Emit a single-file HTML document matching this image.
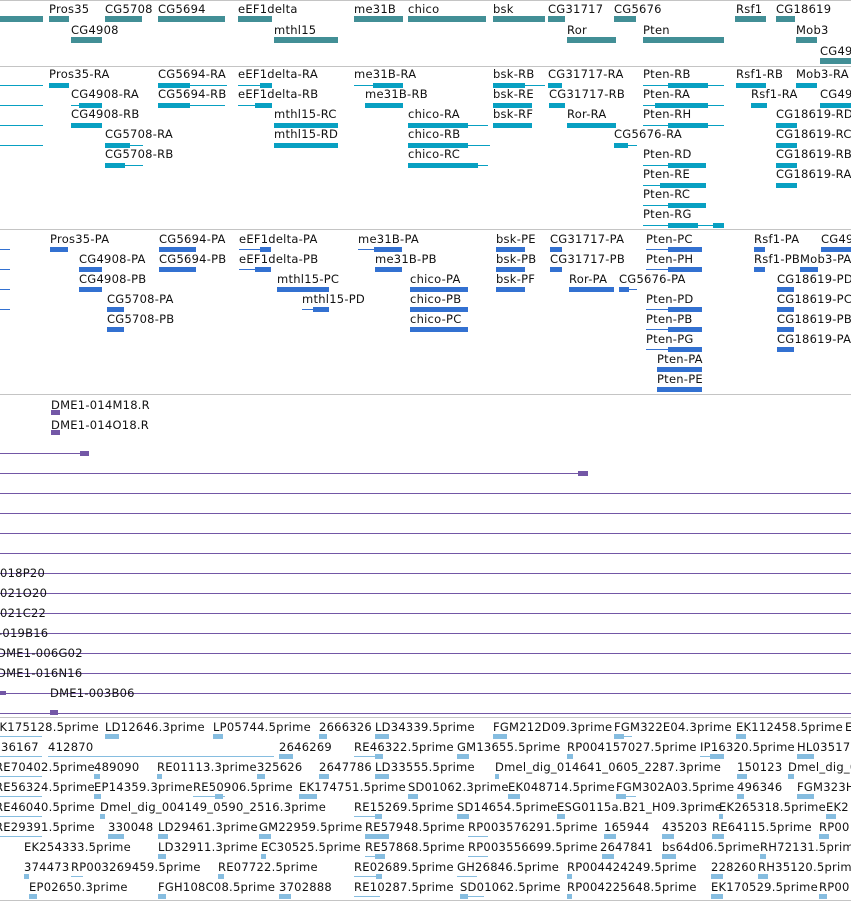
<!DOCTYPE html>
<html><head><meta charset="utf-8"><style>
*{margin:0;padding:0}
body{width:851px;height:902px;background:#fff;position:relative;overflow:hidden;font-family:"DejaVu Sans","Liberation Sans",sans-serif}
.s{position:absolute;left:0;width:851px;height:1px;background:#c4c4c4}
.k{position:absolute;left:0;width:851px}
.r{position:absolute;left:0;width:851px;height:20px}
.l{position:absolute;top:0;font-size:11.5px;line-height:13px;letter-spacing:.25px;white-space:nowrap;color:#111}
.r i{position:absolute;display:block}
.k1 i{top:13px;height:6px;background:#428f96}
.k2 .t{top:17px;height:1px;background:#08a0c2}.k2 .b{top:15px;height:5px;background:#08a0c2}
.k3 .t{top:16px;height:1px;background:#3371d1}.k3 .b{top:14px;height:5px;background:#3371d1}
.k4 .t{top:13px;height:1px;background:#7357a6}.k4 .b{top:11px;height:5px;background:#7357a6}
.k5 .t{top:15px;height:1px;background:#86bde0}.k5 .b{top:13px;height:5px;background:#86bde0}
</style></head><body>
<div class="s" style="top:0"></div>
<div class="s" style="top:66px"></div>
<div class="s" style="top:229px"></div>
<div class="s" style="top:394px"></div>
<div class="s" style="top:717px"></div>
<div class="s" style="top:900px"></div>

<!-- genes -->
<div class="k k1" style="top:3px">
<div class="r" style="top:0">
<i style="left:0;width:43px"></i>
<span class="l" style="left:49px">Pros35</span><i style="left:49px;width:20px"></i>
<span class="l" style="left:105px">CG5708</span><i style="left:105px;width:37px"></i>
<span class="l" style="left:158px">CG5694</span><i style="left:158px;width:67px"></i>
<span class="l" style="left:238px">eEF1delta</span><i style="left:238px;width:34px"></i>
<span class="l" style="left:354px">me31B</span><i style="left:354px;width:49px"></i>
<span class="l" style="left:408px">chico</span><i style="left:408px;width:78px"></i>
<span class="l" style="left:493px">bsk</span><i style="left:493px;width:52px"></i>
<span class="l" style="left:548px">CG31717</span><i style="left:548px;width:17px"></i>
<span class="l" style="left:614px">CG5676</span><i style="left:614px;width:22px"></i>
<span class="l" style="left:736px">Rsf1</span><i style="left:735px;width:31px"></i>
<span class="l" style="left:776px">CG18619</span><i style="left:776px;width:19px"></i>
</div>
<div class="r" style="top:21px">
<span class="l" style="left:71px">CG4908</span><i style="left:71px;width:31px"></i>
<span class="l" style="left:274px">mthl15</span><i style="left:274px;width:64px"></i>
<span class="l" style="left:567px">Ror</span><i style="left:567px;width:49px"></i>
<span class="l" style="left:643px">Pten</span><i style="left:643px;width:81px"></i>
<span class="l" style="left:796px">Mob3</span><i style="left:796px;width:21px"></i>
</div>
<div class="r" style="top:42px">
<span class="l" style="left:820px">CG49</span><i style="left:820px;width:31px"></i>
</div>
</div>

<!-- transcripts -->
<div class="k k2" style="top:68px">
<div class="r" style="top:0">
<i class="t" style="left:0;width:43px"></i>
<span class="l" style="left:49px">Pros35-RA</span><i class="b" style="left:49px;width:20px"></i>
<span class="l" style="left:158px">CG5694-RA</span><i class="b" style="left:158px;width:32px"></i><i class="t" style="left:158px;width:69px"></i>
<span class="l" style="left:238px">eEF1delta-RA</span><i class="t" style="left:238px;width:34px"></i><i class="b" style="left:260px;width:12px"></i>
<span class="l" style="left:354px">me31B-RA</span><i class="t" style="left:354px;width:49px"></i><i class="b" style="left:373px;width:30px"></i>
<span class="l" style="left:493px">bsk-RB</span><i class="b" style="left:493px;width:32px"></i><i class="t" style="left:493px;width:52px"></i>
<span class="l" style="left:548px">CG31717-RA</span><i class="b" style="left:548px;width:14px"></i>
<span class="l" style="left:643px">Pten-RB</span><i class="t" style="left:643px;width:81px"></i><i class="b" style="left:668px;width:40px"></i>
<span class="l" style="left:736px">Rsf1-RB</span><i class="b" style="left:736px;width:30px"></i>
<span class="l" style="left:796px">Mob3-RA</span><i class="b" style="left:796px;width:21px"></i>
</div>
<div class="r" style="top:20px">
<i class="t" style="left:0;width:43px"></i>
<span class="l" style="left:71px">CG4908-RA</span><i class="t" style="left:71px;width:31px"></i><i class="b" style="left:79px;width:23px"></i>
<span class="l" style="left:158px">CG5694-RB</span><i class="b" style="left:158px;width:32px"></i><i class="t" style="left:158px;width:67px"></i>
<span class="l" style="left:238px">eEF1delta-RB</span><i class="t" style="left:238px;width:34px"></i><i class="b" style="left:255px;width:17px"></i>
<span class="l" style="left:365px">me31B-RB</span><i class="b" style="left:365px;width:38px"></i>
<span class="l" style="left:493px">bsk-RE</span><i class="b" style="left:493px;width:39px"></i>
<span class="l" style="left:549px">CG31717-RB</span><i class="b" style="left:549px;width:16px"></i>
<span class="l" style="left:643px">Pten-RA</span><i class="t" style="left:643px;width:81px"></i><i class="b" style="left:655px;width:53px"></i>
<span class="l" style="left:751px">Rsf1-RA</span><i class="b" style="left:751px;width:16px"></i>
<span class="l" style="left:820px">CG49</span><i class="b" style="left:820px;width:31px"></i>
</div>
<div class="r" style="top:40px">
<i class="t" style="left:0;width:43px"></i>
<span class="l" style="left:71px">CG4908-RB</span><i class="b" style="left:71px;width:31px"></i>
<span class="l" style="left:274px">mthl15-RC</span><i class="b" style="left:274px;width:64px"></i>
<span class="l" style="left:408px">chico-RA</span><i class="b" style="left:408px;width:60px"></i><i class="t" style="left:408px;width:80px"></i>
<span class="l" style="left:493px">bsk-RF</span><i class="b" style="left:493px;width:39px"></i>
<span class="l" style="left:567px">Ror-RA</span><i class="b" style="left:567px;width:49px"></i>
<span class="l" style="left:643px">Pten-RH</span><i class="t" style="left:643px;width:81px"></i><i class="b" style="left:668px;width:40px"></i>
<span class="l" style="left:776px">CG18619-RD</span><i class="b" style="left:776px;width:21px"></i>
</div>
<div class="r" style="top:60px">
<i class="t" style="left:0;width:43px"></i>
<span class="l" style="left:105px">CG5708-RA</span><i class="b" style="left:105px;width:25px"></i><i class="t" style="left:105px;width:38px"></i>
<span class="l" style="left:274px">mthl15-RD</span><i class="b" style="left:274px;width:64px"></i>
<span class="l" style="left:408px">chico-RB</span><i class="b" style="left:408px;width:60px"></i><i class="t" style="left:408px;width:82px"></i>
<span class="l" style="left:614px">CG5676-RA</span><i class="b" style="left:614px;width:14px"></i><i class="t" style="left:614px;width:23px"></i>
<span class="l" style="left:776px">CG18619-RC</span><i class="b" style="left:776px;width:21px"></i>
</div>
<div class="r" style="top:80px">
<span class="l" style="left:105px">CG5708-RB</span><i class="b" style="left:105px;width:20px"></i><i class="t" style="left:105px;width:38px"></i>
<span class="l" style="left:408px">chico-RC</span><i class="b" style="left:408px;width:70px"></i><i class="t" style="left:408px;width:80px"></i>
<span class="l" style="left:643px">Pten-RD</span><i class="t" style="left:643px;width:63px"></i><i class="b" style="left:668px;width:38px"></i>
<span class="l" style="left:776px">CG18619-RB</span><i class="b" style="left:776px;width:21px"></i>
</div>
<div class="r" style="top:100px">
<span class="l" style="left:643px">Pten-RE</span><i class="t" style="left:643px;width:63px"></i><i class="b" style="left:660px;width:46px"></i>
<span class="l" style="left:776px">CG18619-RA</span><i class="b" style="left:776px;width:21px"></i>
</div>
<div class="r" style="top:120px">
<span class="l" style="left:643px">Pten-RC</span><i class="t" style="left:643px;width:63px"></i><i class="b" style="left:668px;width:38px"></i>
</div>
<div class="r" style="top:140px">
<span class="l" style="left:643px">Pten-RG</span><i class="t" style="left:643px;width:81px"></i><i class="b" style="left:668px;width:30px"></i><i class="b" style="left:713px;width:11px"></i>
</div>
</div>

<!-- proteins -->
<div class="k k3" style="top:233px">
<div class="r" style="top:0">
<i class="t" style="left:0;width:10px"></i>
<span class="l" style="left:50px">Pros35-PA</span><i class="b" style="left:50px;width:18px"></i>
<span class="l" style="left:159px">CG5694-PA</span><i class="b" style="left:159px;width:37px"></i>
<span class="l" style="left:239px">eEF1delta-PA</span><i class="t" style="left:239px;width:32px"></i><i class="b" style="left:260px;width:11px"></i>
<span class="l" style="left:358px">me31B-PA</span><i class="t" style="left:358px;width:44px"></i><i class="b" style="left:374px;width:28px"></i>
<span class="l" style="left:496px">bsk-PE</span><i class="b" style="left:496px;width:29px"></i>
<span class="l" style="left:550px">CG31717-PA</span><i class="b" style="left:550px;width:12px"></i>
<span class="l" style="left:646px">Pten-PC</span><i class="t" style="left:646px;width:56px"></i><i class="b" style="left:668px;width:34px"></i>
<span class="l" style="left:754px">Rsf1-PA</span><i class="b" style="left:754px;width:11px"></i>
<span class="l" style="left:821px">CG49</span><i class="b" style="left:821px;width:30px"></i>
</div>
<div class="r" style="top:20px">
<i class="t" style="left:0;width:10px"></i>
<span class="l" style="left:79px">CG4908-PA</span><i class="b" style="left:79px;width:23px"></i>
<span class="l" style="left:159px">CG5694-PB</span><i class="b" style="left:159px;width:37px"></i>
<span class="l" style="left:239px">eEF1delta-PB</span><i class="t" style="left:239px;width:32px"></i><i class="b" style="left:255px;width:16px"></i>
<span class="l" style="left:375px">me31B-PB</span><i class="b" style="left:375px;width:27px"></i>
<span class="l" style="left:496px">bsk-PB</span><i class="b" style="left:496px;width:29px"></i>
<span class="l" style="left:550px">CG31717-PB</span><i class="b" style="left:550px;width:12px"></i>
<span class="l" style="left:646px">Pten-PH</span><i class="t" style="left:646px;width:56px"></i><i class="b" style="left:668px;width:34px"></i>
<span class="l" style="left:754px">Rsf1-PB</span><i class="b" style="left:754px;width:11px"></i>
<span class="l" style="left:800px">Mob3-PA</span><i class="b" style="left:800px;width:18px"></i>
</div>
<div class="r" style="top:40px">
<i class="t" style="left:0;width:10px"></i>
<span class="l" style="left:79px">CG4908-PB</span><i class="b" style="left:79px;width:23px"></i>
<span class="l" style="left:277px">mthl15-PC</span><i class="b" style="left:277px;width:52px"></i>
<span class="l" style="left:410px">chico-PA</span><i class="b" style="left:410px;width:58px"></i>
<span class="l" style="left:496px">bsk-PF</span><i class="b" style="left:496px;width:29px"></i>
<span class="l" style="left:569px">Ror-PA</span><i class="b" style="left:569px;width:45px"></i>
<span class="l" style="left:619px">CG5676-PA</span><i class="b" style="left:619px;width:10px"></i><i class="t" style="left:619px;width:18px"></i>
<span class="l" style="left:777px">CG18619-PD</span><i class="b" style="left:777px;width:17px"></i>
</div>
<div class="r" style="top:60px">
<i class="t" style="left:0;width:10px"></i>
<span class="l" style="left:107px">CG5708-PA</span><i class="b" style="left:107px;width:17px"></i>
<span class="l" style="left:302px">mthl15-PD</span><i class="t" style="left:302px;width:27px"></i><i class="b" style="left:313px;width:16px"></i>
<span class="l" style="left:410px">chico-PB</span><i class="b" style="left:410px;width:58px"></i>
<span class="l" style="left:646px">Pten-PD</span><i class="t" style="left:646px;width:56px"></i><i class="b" style="left:668px;width:34px"></i>
<span class="l" style="left:777px">CG18619-PC</span><i class="b" style="left:777px;width:17px"></i>
</div>
<div class="r" style="top:80px">
<span class="l" style="left:107px">CG5708-PB</span><i class="b" style="left:107px;width:17px"></i>
<span class="l" style="left:410px">chico-PC</span><i class="b" style="left:410px;width:58px"></i>
<span class="l" style="left:646px">Pten-PB</span><i class="t" style="left:646px;width:56px"></i><i class="b" style="left:668px;width:34px"></i>
<span class="l" style="left:777px">CG18619-PB</span><i class="b" style="left:777px;width:17px"></i>
</div>
<div class="r" style="top:100px">
<span class="l" style="left:646px">Pten-PG</span><i class="t" style="left:646px;width:56px"></i><i class="b" style="left:668px;width:34px"></i>
<span class="l" style="left:777px">CG18619-PA</span><i class="b" style="left:777px;width:17px"></i>
</div>
<div class="r" style="top:120px">
<span class="l" style="left:657px">Pten-PA</span><i class="b" style="left:657px;width:45px"></i>
</div>
<div class="r" style="top:140px">
<span class="l" style="left:657px">Pten-PE</span><i class="b" style="left:657px;width:45px"></i>
</div>
</div>

<!-- purple -->
<div class="k k4" style="top:399px">
<div class="r" style="top:0"><span class="l" style="left:51px">DME1-014M18.R</span><i class="b" style="left:51px;width:9px"></i></div>
<div class="r" style="top:20px"><span class="l" style="left:51px">DME1-014O18.R</span><i class="b" style="left:51px;width:9px"></i></div>
<div class="r" style="top:41px"><i class="t" style="left:0;width:88px"></i><i class="b" style="left:80px;width:9px"></i></div>
<div class="r" style="top:61px"><i class="t" style="left:0;width:588px"></i><i class="b" style="left:578px;width:10px"></i></div>
<div class="r" style="top:81px"><i class="t" style="left:0;width:851px"></i></div>
<div class="r" style="top:101px"><i class="t" style="left:0;width:851px"></i></div>
<div class="r" style="top:121px"><i class="t" style="left:0;width:851px"></i></div>
<div class="r" style="top:141px"><i class="t" style="left:0;width:851px"></i></div>
<div class="r" style="top:161px"><i class="t" style="left:0;width:851px"></i></div>
<div class="r" style="top:168px"><span class="l" style="left:0">018P20</span></div>
<div class="r" style="top:181px"><i class="t" style="left:0;width:851px"></i></div>
<div class="r" style="top:188px"><span class="l" style="left:0">021O20</span></div>
<div class="r" style="top:201px"><i class="t" style="left:0;width:851px"></i></div>
<div class="r" style="top:208px"><span class="l" style="left:0">021C22</span></div>
<div class="r" style="top:221px"><i class="t" style="left:0;width:851px"></i></div>
<div class="r" style="top:228px"><span class="l" style="left:-2px">-019B16</span></div>
<div class="r" style="top:241px"><i class="t" style="left:0;width:851px"></i></div>
<div class="r" style="top:248px"><span class="l" style="left:-3px">DME1-006G02</span></div>
<div class="r" style="top:261px"><i class="t" style="left:0;width:851px"></i></div>
<div class="r" style="top:268px"><span class="l" style="left:-3px">DME1-016N16</span></div>
<div class="r" style="top:281px"><i class="t" style="left:0;width:851px"></i><i class="b" style="left:0;width:6px;top:11px;height:4px"></i></div>
<div class="r" style="top:288px"><span class="l" style="left:50px">DME1-003B06</span></div>
<div class="r" style="top:301px"><i class="t" style="left:0;width:851px"></i><i class="b" style="left:50px;width:8px;top:10px;height:5px"></i></div>
</div>

<!-- ESTs -->
<div class="k k5" style="top:721px">
<div class="r" style="top:0">
<span class="l" style="left:-8px">EK175128.5prime</span><i class="t" style="left:0;width:42px"></i>
<span class="l" style="left:105px">LD12646.3prime</span><i class="b" style="left:105px;width:14px"></i>
<span class="l" style="left:213px">LP05744.5prime</span><i class="b" style="left:213px;width:10px"></i>
<span class="l" style="left:319px">2666326</span><i class="b" style="left:319px;width:8px"></i>
<span class="l" style="left:375px">LD34339.5prime</span><i class="b" style="left:375px;width:14px"></i>
<span class="l" style="left:493px">FGM212D09.3prime</span><i class="b" style="left:493px;width:14px"></i>
<span class="l" style="left:614px">FGM322E04.3prime</span><i class="t" style="left:614px;width:18px"></i><i class="b" style="left:614px;width:10px"></i>
<span class="l" style="left:736px">EK112458.5prime</span><i class="b" style="left:736px;width:10px"></i>
<span class="l" style="left:845px">E</span>
</div>
<div class="r" style="top:20px">
<span class="l" style="left:1px">36167</span><i class="t" style="left:0;width:42px"></i>
<span class="l" style="left:48px">412870</span><i class="t" style="left:48px;width:226px"></i>
<span class="l" style="left:279px">2646269</span><i class="b" style="left:279px;width:14px"></i>
<span class="l" style="left:354px">RE46322.5prime</span><i class="t" style="left:354px;width:25px"></i><i class="b" style="left:375px;width:8px"></i>
<span class="l" style="left:457px">GM13655.5prime</span><i class="b" style="left:457px;width:12px"></i>
<span class="l" style="left:567px">RP004157027.5prime</span><i class="b" style="left:567px;width:6px"></i>
<span class="l" style="left:700px">IP16320.5prime</span><i class="t" style="left:700px;width:24px"></i><i class="b" style="left:710px;width:14px"></i>
<span class="l" style="left:797px">HL035170</span><i class="b" style="left:797px;width:17px"></i>
</div>
<div class="r" style="top:40px">
<span class="l" style="left:-5px">RE70402.5prime</span><i class="t" style="left:0;width:42px"></i>
<span class="l" style="left:94px">489090</span><i class="b" style="left:94px;width:6px"></i>
<span class="l" style="left:157px">RE01113.3prime</span><i class="b" style="left:157px;width:5px"></i>
<span class="l" style="left:257px">325626</span><i class="b" style="left:257px;width:8px"></i>
<span class="l" style="left:319px">2647786</span><i class="b" style="left:319px;width:10px"></i>
<span class="l" style="left:375px">LD33555.5prime</span><i class="b" style="left:375px;width:14px"></i>
<span class="l" style="left:495px">Dmel_dig_014641_0605_2287.3prime</span><i class="b" style="left:495px;width:4px"></i>
<span class="l" style="left:737px">150123</span><i class="b" style="left:737px;width:10px"></i>
<span class="l" style="left:788px">Dmel_dig_0</span><i class="b" style="left:788px;width:6px"></i>
</div>
<div class="r" style="top:60px">
<span class="l" style="left:-5px">RE56324.5prime</span><i class="t" style="left:0;width:42px"></i>
<span class="l" style="left:94px">EP14359.3prime</span><i class="b" style="left:94px;width:7px"></i>
<span class="l" style="left:193px">RE50906.5prime</span><i class="t" style="left:193px;width:32px"></i><i class="b" style="left:215px;width:8px"></i>
<span class="l" style="left:299px">EK174751.5prime</span><i class="b" style="left:299px;width:18px"></i>
<span class="l" style="left:408px">SD01062.3prime</span><i class="b" style="left:408px;width:10px"></i>
<span class="l" style="left:508px">EK048714.5prime</span><i class="b" style="left:508px;width:12px"></i>
<span class="l" style="left:616px">FGM302A03.5prime</span><i class="t" style="left:616px;width:20px"></i><i class="b" style="left:616px;width:10px"></i>
<span class="l" style="left:737px">496346</span><i class="b" style="left:737px;width:7px"></i>
<span class="l" style="left:797px">FGM323H</span><i class="b" style="left:797px;width:17px"></i>
</div>
<div class="r" style="top:80px">
<span class="l" style="left:-5px">RE46040.5prime</span><i class="t" style="left:0;width:42px"></i>
<span class="l" style="left:100px">Dmel_dig_004149_0590_2516.3prime</span><i class="b" style="left:100px;width:5px"></i>
<span class="l" style="left:354px">RE15269.5prime</span><i class="t" style="left:354px;width:25px"></i><i class="b" style="left:375px;width:7px"></i>
<span class="l" style="left:457px">SD14654.5prime</span><i class="b" style="left:457px;width:12px"></i>
<span class="l" style="left:557px">ESG0115a.B21_H09.3prime</span><i class="b" style="left:557px;width:8px"></i>
<span class="l" style="left:719px">EK265318.5prime</span><i class="b" style="left:719px;width:4px"></i>
<span class="l" style="left:826px">EK2</span><i class="b" style="left:826px;width:10px"></i>
</div>
<div class="r" style="top:100px">
<span class="l" style="left:-5px">RE29391.5prime</span><i class="t" style="left:0;width:42px"></i>
<span class="l" style="left:108px">330048</span><i class="b" style="left:108px;width:16px"></i>
<span class="l" style="left:158px">LD29461.3prime</span><i class="b" style="left:158px;width:10px"></i>
<span class="l" style="left:259px">GM22959.5prime</span><i class="b" style="left:259px;width:12px"></i>
<span class="l" style="left:365px">RE57948.5prime</span><i class="b" style="left:365px;width:24px"></i>
<span class="l" style="left:468px">RP003576291.5prime</span><i class="t" style="left:468px;width:20px"></i>
<span class="l" style="left:604px">165944</span><i class="b" style="left:604px;width:12px"></i>
<span class="l" style="left:662px">435203</span><i class="b" style="left:662px;width:12px"></i>
<span class="l" style="left:712px">RE64115.5prime</span><i class="b" style="left:712px;width:12px"></i>
<span class="l" style="left:819px">RP00</span><i class="b" style="left:819px;width:10px"></i>
</div>
<div class="r" style="top:120px">
<span class="l" style="left:24px">EK254333.5prime</span>
<span class="l" style="left:158px">LD32911.3prime</span><i class="b" style="left:158px;width:8px"></i>
<span class="l" style="left:261px">EC30525.5prime</span><i class="b" style="left:261px;width:5px"></i>
<span class="l" style="left:365px">RE57868.5prime</span><i class="t" style="left:365px;width:16px"></i><i class="b" style="left:375px;width:10px"></i>
<span class="l" style="left:468px">RP003556699.5prime</span><i class="t" style="left:468px;width:20px"></i>
<span class="l" style="left:600px">2647841</span><i class="b" style="left:602px;width:12px"></i>
<span class="l" style="left:662px">bs64d06.5prime</span><i class="b" style="left:662px;width:14px"></i>
<span class="l" style="left:760px">RH72131.5prime</span><i class="b" style="left:760px;width:6px"></i>
</div>
<div class="r" style="top:140px">
<span class="l" style="left:24px">374473</span><i class="b" style="left:24px;width:5px"></i>
<span class="l" style="left:71px">RP003269459.5prime</span><i class="t" style="left:71px;width:12px"></i>
<span class="l" style="left:218px">RE07722.5prime</span><i class="b" style="left:218px;width:6px"></i>
<span class="l" style="left:354px">RE02689.5prime</span><i class="t" style="left:354px;width:28px"></i><i class="b" style="left:376px;width:6px"></i>
<span class="l" style="left:457px">GH26846.5prime</span><i class="t" style="left:457px;width:20px"></i>
<span class="l" style="left:567px">RP004424249.5prime</span><i class="b" style="left:567px;width:5px"></i>
<span class="l" style="left:711px">228260</span><i class="b" style="left:711px;width:12px"></i>
<span class="l" style="left:758px">RH35120.5prime</span><i class="b" style="left:758px;width:10px"></i>
</div>
<div class="r" style="top:160px">
<span class="l" style="left:29px">EP02650.3prime</span><i class="b" style="left:29px;width:8px"></i>
<span class="l" style="left:158px">FGH108C08.5prime</span><i class="b" style="left:158px;width:8px"></i>
<span class="l" style="left:279px">3702888</span><i class="b" style="left:279px;width:12px"></i>
<span class="l" style="left:354px">RE10287.5prime</span><i class="t" style="left:354px;width:26px"></i>
<span class="l" style="left:460px">SD01062.5prime</span><i class="t" style="left:460px;width:24px"></i><i class="b" style="left:460px;width:8px"></i>
<span class="l" style="left:567px">RP004225648.5prime</span><i class="b" style="left:567px;width:5px"></i>
<span class="l" style="left:711px">EK170529.5prime</span><i class="b" style="left:711px;width:12px"></i>
<span class="l" style="left:819px">RP00</span><i class="b" style="left:819px;width:8px"></i>
</div>
</div>
</body></html>
